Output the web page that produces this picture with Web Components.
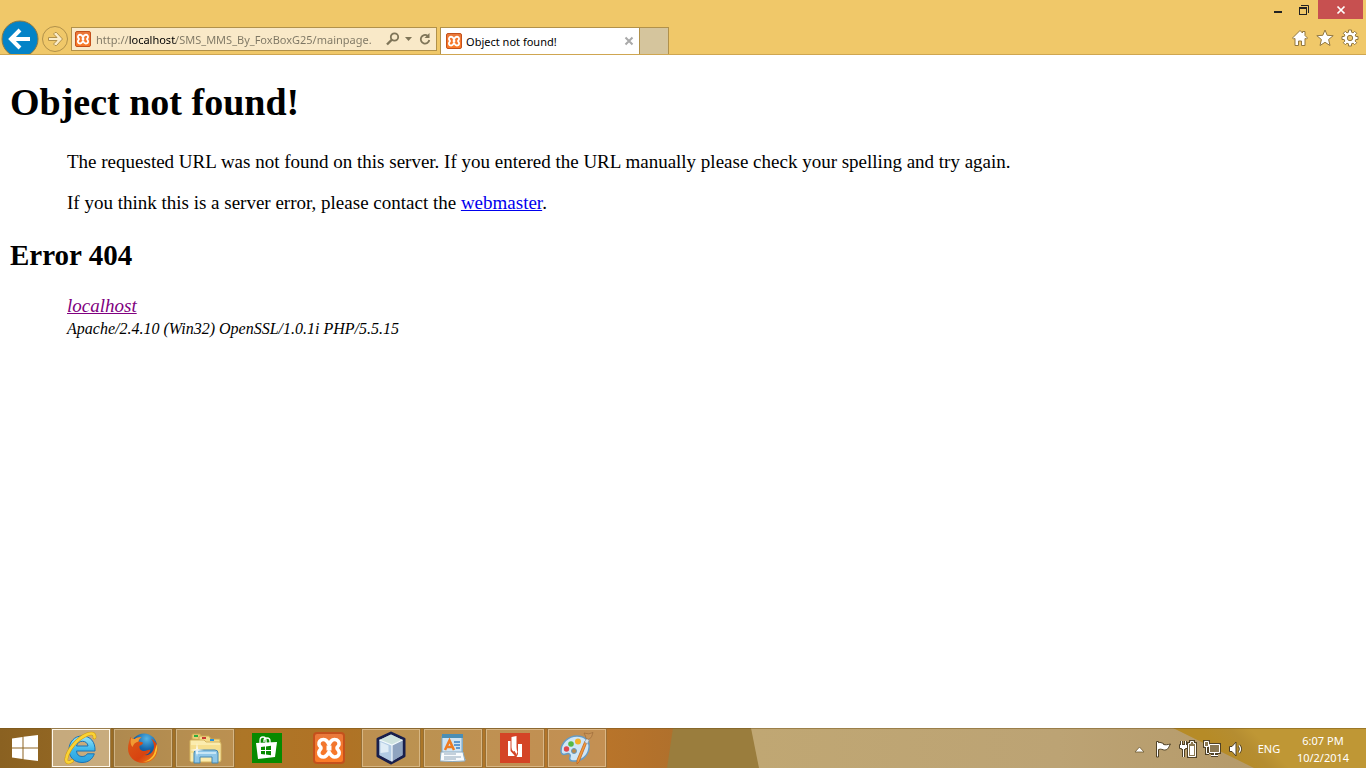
<!DOCTYPE html>
<html lang="en">
<head>
<meta charset="utf-8">
<title>Object not found!</title>
<style>
	html, body {
		height: 100%;
		margin: 0;
	}
	body {
		font-family: "Noto Sans", "Open Sans", sans-serif;
		font-size: 11px;
		background-color: #fff;
	}
</style>
</head>
<body>
	<desktop-screen>
		<browser-chrome slot="top" url="http://localhost/SMS_MMS_By_FoxBoxG25/mainpage.">
			<browser-tab>Object not found!</browser-tab>
		</browser-chrome>

		<error-page heading="Object not found!" code="Error 404">
			<p>The requested URL was not found on this server. If you entered the URL manually please check your spelling and try again.</p>
			<p>If you think this is a server error, please contact the <a href="mailto:postmaster@localhost">webmaster</a>.</p>
			<a slot="host" href="/">localhost</a>
			<span slot="server">Apache/2.4.10 (Win32) OpenSSL/1.0.1i PHP/5.5.15</span>
		</error-page>

		<task-bar slot="bottom">
			<task-button label="Internet Explorer" state="active">
				<svg width="36" height="36" viewBox="0 0 36 36">
					<defs>
						<linearGradient id="ie" x1="0" y1="0" x2="0" y2="1">
							<stop offset="0" stop-color="#9be8fb"/>
							<stop offset=".5" stop-color="#3fb9ec"/>
							<stop offset="1" stop-color="#2aa0de"/>
						</linearGradient>
					</defs>
					<path d="M32 21H13.500c.3 3.500 2.300 5.500 5.600 5.500 2.500 0 4.200-1 5.200-2.700h7C29.500 29.500 25 32.500 19 32.500 11 32.500 6 27 6 19.500S11.500 6 19 6c8.500 0 13.500 6 13 15zM25 16c-.4-3-2.500-4.700-5.600-4.700S14.200 13 13.500 16z" fill="url(#ie)" stroke="#1a72b4" stroke-width="1"/>
					<path d="M9 31c-4 2.500-6.500 1.500-5.500-3C5 20 14 8.500 24 4.500c5-2 8-1 7.500 3" fill="none" stroke="#cf9a13" stroke-width="3.600" stroke-linecap="round"/>
					<path d="M9 31c-4 2.500-6.500 1.500-5.500-3C5 20 14 8.500 24 4.500c5-2 8-1 7.500 3" fill="none" stroke="#fbd335" stroke-width="2.600" stroke-linecap="round"/>
				</svg>
			</task-button>
			<task-button label="Firefox" state="open">
				<svg width="32" height="32" viewBox="0 0 32 32">
					<defs>
						<radialGradient id="globe" cx=".6" cy=".2" r=".8">
							<stop offset="0" stop-color="#55b4e4"/>
							<stop offset=".5" stop-color="#1668ad"/>
							<stop offset="1" stop-color="#123a73"/>
						</radialGradient>
						<linearGradient id="fox" x1="0" y1="0" x2="1" y2="1">
							<stop offset="0" stop-color="#dc5a17"/>
							<stop offset=".6" stop-color="#d8430f"/>
							<stop offset="1" stop-color="#f08a1d"/>
						</linearGradient>
					</defs>
					<circle cx="17" cy="14.500" r="13" fill="url(#globe)"/>
					<path d="M3.500 5C5 6.500 6 7 8 7c2-1.500 4.500-2 6.500-1.500-2 1-3 2.500-3 4 2 .2 4 .5 4.500 1.500-.5 1.500-2 2-3.500 3-.5 3 1.500 5 5 5 2.500-.3 4-2 6-1-1 3-3 4.500-6 5 5 1 9-3 9.500-8 0-3-1-6-3-8.500C28.500 9 31 13 30.500 18 30 26 23.500 31 16 31 7.500 31 1 24.500 1 16.500 1 12 2.500 9 3.500 5z" fill="url(#fox)"/>
					<path d="M30 12c1.500 9-4 18-14 18 7-2 11-6 12-12z" fill="#fbc22f"/>
					<path d="M4 6c-1 5 0 7 1.500 9 1-3 3-5 6-5.500 0-1.500 1-3 3-4C11 5 9 6 8 7 6 7 5 6.500 4 6z" fill="#f19a33"/>
				</svg>
			</task-button>
			<task-button label="File Explorer" state="open">
				<svg width="34" height="32" viewBox="0 0 34 32">
					<path d="M4 7V3q0-1 1-1h7l2 3h8v4z" fill="#ead078" stroke="#c9a54e"/>
					<path d="M11 8V5q0-1 1-1h9l2 3h9v8z" fill="#f4dc8b" stroke="#c9a54e"/>
					<path d="M6 3h4v2H6z" fill="#2bae3d"/>
					<path d="M14 5h4v2h-4z" fill="#c83a33"/>
					<path d="M22 7h4v2h-4z" fill="#2492dd"/>
					<path d="M2 29V9q0-1 1-1h13l2 2h13q2 0 2 2v16q0 2-2 2H3z" fill="#fbecae" stroke="#d5b45f"/>
					<path d="M3 13h29v8H3z" fill="#f6df8f"/>
					<path d="M6 31V21q0-3 3-3h18q3 0 3 3v10h-6v-6H12v6z" fill="#8fc7e8" stroke="#4787ae"/>
					<path d="M8 20h20v2H8z" fill="#c7e6f5"/>
					<path d="M9 11l1 6 6 1-6 1-1 6-1-6-6-1 6-1z" fill="#fff" opacity=".8"/>
				</svg>
			</task-button>
			<task-button label="Store">
				<svg width="30" height="30" viewBox="0 0 30 30">
					<path d="M0 0h30v30H0z" fill="#088a00"/>
					<path d="M8 10V7.500C8 5.500 9 4 11 4s3 1.500 3 3.500V10M12 9V7.500C12 5.500 13.500 5 15 5s3 1 3 3V10" fill="none" stroke="#fff" stroke-width="1.300"/>
					<path d="M4 10l21-1-2 15-17 2z" fill="#fff"/>
					<path d="M9 14l4-.5V17H9zM14 13.400l5-.6V17h-5zM9 18h4v3.500L9 21zM14 18h5v4.200l-5-.6z" fill="#088a00"/>
				</svg>
			</task-button>
			<task-button label="XAMPP Control Panel">
				<xampp-logo size="32"></xampp-logo>
			</task-button>
			<task-button label="NetBeans" state="open">
				<svg width="32" height="34" viewBox="0 0 32 34">
					<path d="M16 2l13 6v17l-13 7-13-7V8z" fill="#a9bfd6" stroke="#191f4c" stroke-width="3" stroke-linejoin="round"/>
					<path d="M16 3.500L27.500 9 17 14 4.500 9z" fill="#cfe3df"/>
					<path d="M4.500 9L17 14v16.500L4.500 24z" fill="#b2cbe4"/>
					<path d="M5.500 11l8 3.500V21l-8 1z" fill="#e0edf6"/>
					<path d="M17 14l10.500-5v15L17 30.500z" fill="#8fa4c0"/>
					<path d="M4.500 9L17 14l10.500-5M17 14v16.500" fill="none" stroke="#f4fbfd" stroke-width="1.200"/>
				</svg>
			</task-button>
			<task-button label="WordPad" state="open">
				<svg width="26" height="30" viewBox="0 0 26 30">
					<path d="M2 3h21v19l3 5-24 1z" fill="#8db4cd"/>
					<path d="M2 3h20v22H2z" fill="#cfe4f4" stroke="#7ba7c6"/>
					<path d="M2 1h21v4H2z" fill="#4a8eb5"/>
					<path d="M1 19h22l2 9q-12 1-25 0z" fill="#f8fbfd" stroke="#8aa9bf"/>
					<path d="M5 17L9.500 7.500 14 17M6.500 14h6" fill="none" stroke="#ee7b22" stroke-width="2.500"/>
					<path d="M14 9h6M14 12h6M16 15h4" stroke="#3a7fc8" stroke-width="1.500"/>
					<path d="M4 21h12M4 24h17M4 26h12" stroke="#8fa6ba"/>
				</svg>
			</task-button>
			<task-button label="Editor" state="open">
				<svg width="30" height="30" viewBox="0 0 30 30">
					<path d="M0 0h30v30H0z" fill="#d44426"/>
					<path d="M8 8h2.500v10l4.500 5H8zM18 11h4v13h-5.500l1.500-3z" fill="#fff"/>
					<path d="M11.500 4l5-1v11q0 3 1 5l-2 4q1-3-2-4.500-2-1-2-4z" fill="#fff"/>
					<path d="M14 18q3 3 1 5.500-1 1.500-4 .5" fill="none" stroke="#d44426" stroke-width="1"/>
				</svg>
			</task-button>
			<task-button label="Paint" state="open">
				<svg width="34" height="34" viewBox="0 0 34 34">
					<path d="M17 5c8 0 13 5 12 12-1 8-8 14-16 13-3 0-4-2-3-4 1-3-1-4-4-3-3 1-5 0-5-3C1 12 8 5 17 5z" fill="#cfe6f6" stroke="#659bc4" stroke-width="1.500"/>
					<circle cx="14" cy="20" r="2.500" fill="#bd8a48" stroke="#679abf"/>
					<circle cx="6.500" cy="18" r="2.700" fill="#e0474b"/>
					<circle cx="11" cy="13" r="2.800" fill="#55b944"/>
					<circle cx="18" cy="10.500" r="3" fill="#f3b12a"/>
					<path d="M25 10l2 1-8 20-2 2v-4z" fill="#f39a3d" stroke="#be6620" stroke-width=".8"/>
					<path d="M24.500 11l2.500-4 2.500 1-2 5z" fill="#d8e2ea" stroke="#8097a6" stroke-width=".6"/>
					<path d="M24 2q5 2 9-.5-1 5-4 7l-3-1q0-2-2-5.500z" fill="#c99457" stroke="#966536" stroke-width=".6"/>
				</svg>
			</task-button>
		</task-bar>
	</desktop-screen>

<script>
class DesktopScreen extends HTMLElement {
	connectedCallback() {
		this.attachShadow({ mode: "open" }).innerHTML = `
		<style>
			:host {
				display: flex;
				flex-direction: column;
				min-height: 100%;
			}
			main {
				flex: 1;
			}
		</style>
		<slot name="top"></slot>
		<main><slot></slot></main>
		<slot name="bottom"></slot>
		`
	}
}
customElements.define("desktop-screen", DesktopScreen)

class XamppLogo extends HTMLElement {
	connectedCallback() {
		const size = this.getAttribute("size") || "16"
		this.attachShadow({ mode: "open" }).innerHTML = `
		<style>
			:host {
				display: block;
				flex: none;
				width: ${size}px;
				height: ${size}px;
			}
			svg {
				display: block;
			}
		</style>
		<svg width="${size}" height="${size}" viewBox="0 0 32 32">
			<defs>
				<linearGradient id="tile" x1="0" y1="0" x2="0" y2="1">
					<stop offset="0" stop-color="#e8793d"/>
					<stop offset=".5" stop-color="#f5762a"/>
					<stop offset="1" stop-color="#fb7b27"/>
				</linearGradient>
			</defs>
			<rect x="1" y="1" width="30" height="30" rx="3" fill="url(#tile)" stroke="#c4511c" stroke-width="2"/>
			<path d="M16 12.500C14.500 9.500 13.500 7.500 10.500 7.500 7 7.500 5.500 10 6 12.500 6.300 14.500 8 14.500 8 16 8 17.500 6 18 5.800 20.500 5.500 23.500 8 25 10.500 25 13.500 25 14.500 22.500 16 20 17.500 22.500 18.500 25 21.500 25 24 25 26.500 23.500 26.200 20.500 26 18 24 17.500 24 16 24 14.500 25.700 14.500 26 12.500 26.500 10 25 7.500 21.500 7.500 18.500 7.500 17.500 9.500 16 12.500z" fill="none" stroke="#fff" stroke-width="3.600" stroke-linejoin="round"/>
			<path d="M13.500 16h5" stroke="#fff" stroke-width="5"/>
		</svg>
		`
	}
}
customElements.define("xampp-logo", XamppLogo)

class BrowserTab extends HTMLElement {
	connectedCallback() {
		this.attachShadow({ mode: "open" }).innerHTML = `
		<style>
			:host {
				display: flex;
				align-items: center;
				gap: 4px;
				box-sizing: border-box;
				width: 200px;
				padding: 0 5px;
				border: 1px solid #b1914a;
				border-bottom: 0;
				background-color: #fff;
				color: #000;
			}
			span {
				flex: 1;
				white-space: nowrap;
			}
			button {
				display: flex;
				padding: 0;
				border: 0;
				background: none;
			}
		</style>
		<xampp-logo size="16"></xampp-logo>
		<span><slot></slot></span>
		<button aria-label="Close tab">
			<svg width="10" height="10" viewBox="0 0 10 10"><path d="M1.500 1.500l7 7M8.500 1.500l-7 7" stroke="#a9a9a9" stroke-width="2"/></svg>
		</button>
		`
	}
}
customElements.define("browser-tab", BrowserTab)

class BrowserChrome extends HTMLElement {
	connectedCallback() {
		const url = this.getAttribute("url") || "about:blank"
		this.attachShadow({ mode: "open" }).innerHTML = `
		<style>
			:host {
				display: block;
				background-color: #f0c869;
				border-bottom: 1px solid #cfa651;
			}
			button {
				display: flex;
				align-items: center;
				justify-content: center;
				flex: none;
				padding: 0;
				border: 0;
				background: none;
			}
			.caption {
				display: flex;
				justify-content: flex-end;
				height: 20px;
				padding-right: 3px;
			}
			.caption button {
				width: 26px;
				height: 19px;
			}
			.caption .close {
				width: 45px;
				margin-left: 1px;
				background-color: #c75050;
			}
			.bar {
				display: flex;
				height: 34px;
			}
			.left {
				display: flex;
				width: 32%;
				padding-left: 1px;
				box-sizing: border-box;
			}
			.left svg {
				display: block;
			}
			.back {
				align-self: flex-start;
				height: 34px;
				overflow: hidden;
			}
			.forward {
				width: 32px;
			}
			.address {
				display: flex;
				flex: 1;
				align-items: center;
				box-sizing: border-box;
				min-width: 0;
				height: 24px;
				margin: 7px 0 0;
				padding: 0 4px 0 3px;
				border: 1px solid #b1914a;
				background-color: #f9e9c8;
			}
			.address button {
				width: 14px;
				height: 20px;
			}
			.address .drop {
				width: 18px;
			}
			input {
				flex: 1;
				min-width: 0;
				height: 20px;
				padding: 0;
				margin: 0 4px 0 5px;
				border: 0;
				outline: 0;
				font: inherit;
				color: transparent;
				/* the host part of the address is darker than the rest */
				background: linear-gradient(to right, #7d7663 33px, #000 33px, #000 80px, #7d7663 80px);
				-webkit-background-clip: text;
				background-clip: text;
			}
			.tabs {
				display: flex;
				flex: 1;
				margin: 7px 0 0 3px;
			}
			.new {
				box-sizing: border-box;
				width: 29px;
				border: 1px solid #b1914a;
				border-width: 1px 1px 0 0;
				background-color: #d5c59d;
			}
			.tools {
				display: flex;
				align-items: center;
				gap: 7px;
				padding: 2px 7px 0 0;
			}
		</style>
		<div class="caption">
			<button aria-label="Minimize"><svg width="12" height="12" viewBox="0 0 12 12"><path d="M2 7h8v2H2z" fill="#222"/></svg></button>
			<button aria-label="Restore"><svg width="12" height="12" viewBox="0 0 12 12"><path d="M1 3h8v8H1zM2 5v5h6V5z" fill="#222" fill-rule="evenodd"/><path d="M3 1.500h7.500V9" fill="none" stroke="#222"/></svg></button>
			<button class="close" aria-label="Close"><svg width="10" height="10" viewBox="0 0 10 10"><path d="M1.500 1.500l7 7M8.500 1.500l-7 7" stroke="#fff" stroke-width="1.700"/></svg></button>
		</div>
		<div class="bar">
			<div class="left">
				<button class="back" aria-label="Back">
					<svg width="38" height="34" viewBox="0 0 38 34">
						<circle cx="19" cy="19" r="18" fill="#0483c7" stroke="#8f7a42"/>
						<path d="M29 19H11M19 10l-9 9 9 9" fill="none" stroke="#fff" stroke-width="4"/>
					</svg>
				</button>
				<button class="forward" aria-label="Forward">
					<svg width="28" height="34" viewBox="0 0 28 34">
						<circle cx="14" cy="19" r="12.500" fill="none" stroke="#b1914a"/>
						<path d="M7.500 17.500h8.500L12.500 14l1.500-1.500h1.500L21.500 19l-6 6.500H14L12.500 24l3.500-3.500H7.500z" fill="#fbecc9" stroke="#b1914a"/>
					</svg>
				</button>
				<div class="address">
					<xampp-logo size="16"></xampp-logo>
					<input type="text" aria-label="Address" value="${url}">
					<button aria-label="Search"><svg width="14" height="14" viewBox="0 0 14 14"><circle cx="8.500" cy="5" r="3.700" fill="none" stroke="#7f7558" stroke-width="1.800"/><path d="M6 7.500L1 12.500" stroke="#7f7558" stroke-width="2.400"/></svg></button>
					<button class="drop" aria-label="Show address list"><svg width="8" height="4" viewBox="0 0 8 4"><path d="M0 0h7L3.500 4z" fill="#7f7558"/></svg></button>
					<button aria-label="Refresh"><svg width="14" height="14" viewBox="0 0 14 14"><path d="M9.500 3.700A4.300 4.300 0 1 0 11.300 8" fill="none" stroke="#7f7558" stroke-width="1.800"/><path d="M11.500 1v5h-5z" fill="#7f7558"/></svg></button>
				</div>
			</div>
			<div class="tabs">
				<slot></slot>
				<button class="new" aria-label="New tab"></button>
			</div>
			<div class="tools">
				<button aria-label="Home"><svg width="18" height="18" viewBox="0 0 18 18"><path d="M9 1.500L1.500 9l1 1L4 9.500v7h3.500V12h3v4.500H14v-7l1.500.5 1-1L14 6.500V2.500h-2.500V4z" fill="#fff" stroke="#917740"/></svg></button>
				<button aria-label="Favorites"><svg width="18" height="18" viewBox="0 0 18 18"><path d="M9 1l2.200 5.300 6 .4-4.600 3.800L14 16.500l-5-3.200-5 3.200 1.400-6L.8 6.700l6-.4z" fill="#fff" stroke="#917740"/></svg></button>
				<button aria-label="Tools"><svg width="18" height="18" viewBox="0 0 18 18"><path d="M7.500 1h3v2.200l1.600.7 1.600-1.600 2 2-1.500 1.700.6 1.500H17v3h-2.200l-.7 1.600 1.600 1.600-2 2-1.600-1.500-1.600.6V17h-3v-2.200l-1.600-.6-1.600 1.500-2-2 1.500-1.600-.6-1.600H1v-3h2.200L3.900 6 2.300 4.300l2-2L6 3.900l1.500-.7z" fill="#fff" stroke="#917740"/><circle cx="9" cy="9" r="2.700" fill="#f0c869" stroke="#917740"/></svg></button>
			</div>
		</div>
		`
	}
}
customElements.define("browser-chrome", BrowserChrome)

class ErrorPage extends HTMLElement {
	connectedCallback() {
		const heading = this.getAttribute("heading") || "Error"
		const code = this.getAttribute("code") || "Error"
		this.attachShadow({ mode: "open" }).innerHTML = `
		<style>
			:host {
				display: flow-root;
				padding: 0 10px;
				font-family: "Liberation Serif", "Times New Roman", serif;
				font-size: 19px;
				line-height: 22px;
				color: #000;
			}
			h1 {
				margin: 25px 0 27px;
				font-size: 38px;
				line-height: 44px;
			}
			h2 {
				margin: 24px 0 23px;
				font-size: 29px;
				line-height: 34px;
			}
			.text, address {
				margin-left: 57px;
			}
			::slotted(p) {
				margin: 0 0 19px;
			}
			::slotted(p:last-of-type) {
				margin: 0;
			}
			::slotted(a) {
				color: #800080;
			}
			small {
				font-size: 16px;
			}
		</style>
		<h1>${heading}</h1>
		<div class="text"><slot></slot></div>
		<h2>${code}</h2>
		<address>
			<slot name="host"></slot><br>
			<small><slot name="server"></slot></small>
		</address>
		`
	}
}
customElements.define("error-page", ErrorPage)

class TaskButton extends HTMLElement {
	connectedCallback() {
		const label = this.getAttribute("label") || "Program"
		this.attachShadow({ mode: "open" }).innerHTML = `
		<style>
			:host {
				display: block;
				width: 60px;
			}
			button {
				display: flex;
				align-items: center;
				justify-content: center;
				box-sizing: border-box;
				width: 100%;
				height: 40px;
				padding: 0;
				border: 1px solid transparent;
				background: none;
			}
			:host([state]) button {
				border-color: rgba(95, 62, 10, .4);
				background-color: rgba(225, 210, 180, .3);
				box-shadow: inset 0 0 0 1px rgba(255, 240, 210, .4);
			}
			:host([state="active"]) button {
				background-color: rgba(240, 225, 200, .55);
				box-shadow: inset 0 0 0 1px #fff8ea;
			}
		</style>
		<button aria-label="${label}"><slot></slot></button>
		`
	}
}
customElements.define("task-button", TaskButton)

class TaskTray extends HTMLElement {
	connectedCallback() {
		this.attachShadow({ mode: "open" }).innerHTML = `
		<style>
			:host {
				display: flex;
				align-items: center;
				padding-top: 1px;
				color: #fff;
				line-height: 17px;
				white-space: nowrap;
			}
			button {
				display: flex;
				justify-content: center;
				width: 24px;
				padding: 0;
				border: 0;
				background: none;
				color: inherit;
				font: inherit;
			}
			.lang {
				width: 42px;
			}
			.clock {
				width: 66px;
				margin-right: 10px;
				text-align: center;
			}
			svg {
				display: block;
			}
		</style>
		<button aria-label="Show hidden icons"><svg width="18" height="18" viewBox="0 0 18 18"><path d="M4 12l4.500-5 4.500 5z" fill="#fff" stroke="#6d5a33" stroke-width=".8"/></svg></button>
		<button aria-label="Action Center"><svg width="18" height="18" viewBox="0 0 18 18"><path d="M1.500 1.500h2v1.200c2-.7 3 .3 5 .8v1c2 .5 4 .3 7-.5-2 3-2 6-6 6-2 0-3-1.500-6-.5V17h-2z" fill="#fff" stroke="#4f4126"/></svg></button>
		<button aria-label="Battery"><svg width="18" height="18" viewBox="0 0 18 18"><path d="M2.500 1v4M6.500 1v4M4.500 9v8" stroke="#4f4126" stroke-width="3"/><path d="M.500 4.500h8v4h-2v1h-4v-1h-2z" fill="#fff" stroke="#4f4126"/><path d="M2.500 1v4M6.500 1v4M4.500 9v8" stroke="#fff"/><path d="M9.500 3.500h2v-2h3v2h2v13h-7z" fill="#8b7852" stroke="#4f4126" stroke-width="3"/><path d="M9.500 3.500h2v-2h3v2h2v13h-7z" fill="#8b7852" stroke="#fff"/><path d="M11 6h4v9h-4z" fill="#fff"/></svg></button>
		<button aria-label="Network"><svg width="18" height="18" viewBox="0 0 18 18"><path d="M6.500 4.500h10v8h-10zM8 15.500h7M11.500 13v3M1.500 1.500h4v5h-4zM3.500 7v6.500H6" fill="none" stroke="#4f4126" stroke-width="3"/><path d="M6.500 4.500h10v8h-10z" fill="#8b7852" stroke="#fff"/><path d="M8 15.500h7M11.500 13v3M3.500 7v6.500H6" fill="none" stroke="#fff"/><path d="M1.500 1.500h4v5h-4z" fill="#8b7852" stroke="#fff"/></svg></button>
		<button aria-label="Volume"><svg width="18" height="18" viewBox="0 0 18 18"><path d="M2.500 6.500H5l4-4.500v14l-4-4.500H2.500z" fill="#fff" stroke="#4f4126"/><path d="M12 5.500q3 3.500 0 7" fill="none" stroke="#4f4126" stroke-width="3"/><path d="M12 5.500q3 3.500 0 7" fill="none" stroke="#fff" stroke-width="1.300"/></svg></button>
		<button class="lang">ENG</button>
		<button class="clock">6:07 PM<br>10/2/2014</button>
		`
	}
}
customElements.define("task-tray", TaskTray)

class TaskBar extends HTMLElement {
	connectedCallback() {
		this.attachShadow({ mode: "open" }).innerHTML = `
		<style>
			:host {
				display: flex;
				position: relative;
				height: 40px;
				overflow: hidden;
			}
			.wallpaper {
				position: absolute;
				inset: 0;
				width: 100%;
				height: 100%;
			}
			.start {
				position: relative;
				display: flex;
				align-items: center;
				justify-content: center;
				width: 50px;
				padding: 0;
				border: 0;
				background: none;
			}
			.programs {
				position: relative;
				display: flex;
				flex: 1;
				gap: 2px;
				margin-left: 1px;
			}
			task-tray {
				position: relative;
			}
		</style>
		<svg class="wallpaper" viewBox="0 0 1366 40" preserveAspectRatio="none">
			<defs>
				<linearGradient id="wood" gradientUnits="userSpaceOnUse" x1="0" y1="0" x2="675" y2="0">
					<stop offset="0" stop-color="#8a6121"/>
					<stop offset=".25" stop-color="#a17026"/>
					<stop offset=".36" stop-color="#ad7627"/>
					<stop offset=".5" stop-color="#b07225"/>
					<stop offset=".6" stop-color="#ab7728"/>
					<stop offset=".9" stop-color="#b8742a"/>
					<stop offset="1" stop-color="#b0702c"/>
				</linearGradient>
				<linearGradient id="sand" x1="0" y1="0" x2="1" y2="0">
					<stop offset="0" stop-color="#c0a773"/>
					<stop offset=".5" stop-color="#bca374"/>
					<stop offset="1" stop-color="#b19564"/>
				</linearGradient>
				<linearGradient id="gold" gradientUnits="userSpaceOnUse" x1="1225" y1="25" x2="1250" y2="0">
					<stop offset="0" stop-color="#b68b27"/>
					<stop offset=".6" stop-color="#b58d31"/>
					<stop offset="1" stop-color="#bf9735"/>
				</linearGradient>
			</defs>
			<path d="M0 0h690v40H0z" fill="url(#wood)"/>
			<path d="M673 0h90v40h-96z" fill="#9a7d3d"/>
			<path d="M751 0h615v40H759z" fill="url(#sand)"/>
			<path d="M1173 0h193v40h-112z" fill="url(#gold)"/>
			<path d="M0 0h1366v1H0z" fill="#705218" opacity=".45"/>
		</svg>
		<button class="start" aria-label="Start">
			<svg width="28" height="28" viewBox="0 0 28 28"><path d="M1 4.500l10.500-1.500v10.500H1zM12.500 2.800L27 1v12.500H12.500zM1 14.500h10.500V25L1 23.500zM12.500 14.500H27V27l-14.500-1.800z" fill="#fff"/></svg>
		</button>
		<div class="programs"><slot></slot></div>
		<task-tray></task-tray>
		`
	}
}
customElements.define("task-bar", TaskBar)
</script>
</body>
</html>
